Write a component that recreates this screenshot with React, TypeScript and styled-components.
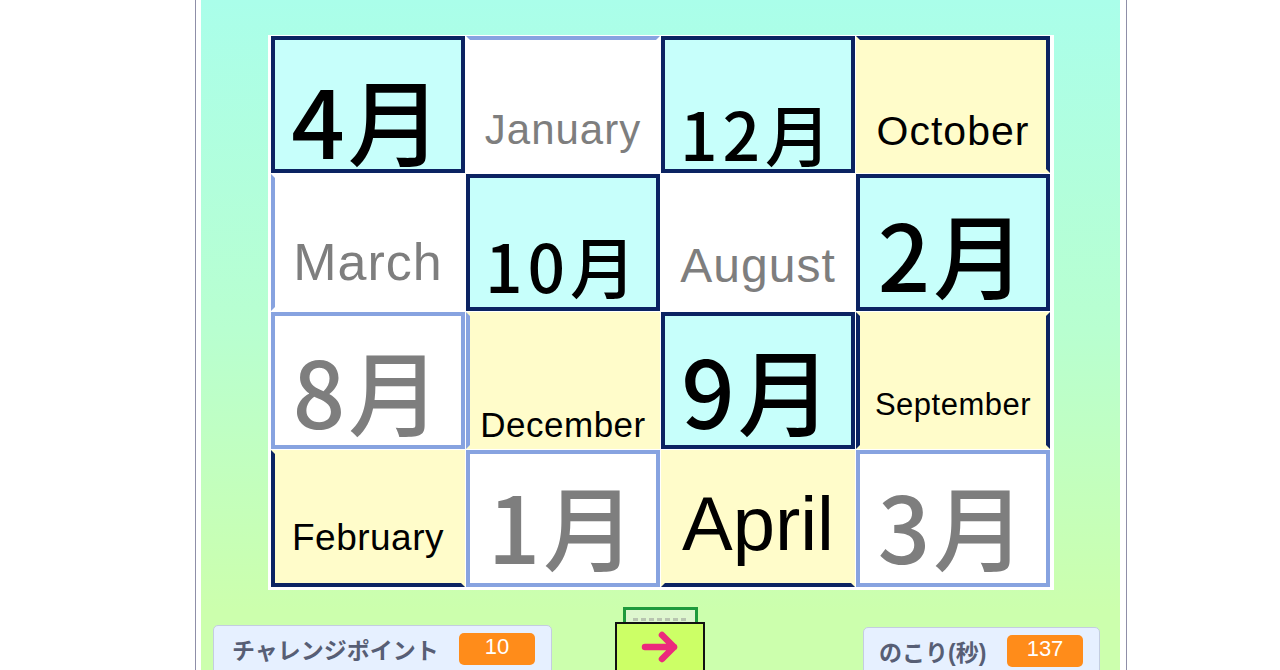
import React from 'react';
import styled, { createGlobalStyle } from 'styled-components';

const NAVY = '#0b2362';
const LIGHT = '#87a3e0';
const FILL: Record<string, string> = { c: '#c7fffb', w: '#ffffff', y: '#fffcca' };

const Global = createGlobalStyle`
  html, body { margin: 0; padding: 0; background: #fff; overflow: hidden; }
  body { font-family: "Liberation Sans", "Noto Sans CJK JP", sans-serif; }
`;

const Page = styled.div`
  width: 1280px;
  height: 670px;
  overflow: hidden;
  background: #fff;
`;

const Stage = styled.div`
  margin-left: 195px;
  width: 932px;
  height: 670px;
  box-sizing: border-box;
  border-left: 1px solid #8f8fa8;
  border-right: 1px solid #8f8fa8;
  padding: 0 6px 0 5px;
  background: #fff;
`;

const Canvas = styled.div`
  height: 100%;
  box-sizing: border-box;
  padding-top: 35px;
  background: linear-gradient(180deg, #aafeea 0px, #b8ffd0 330px, #ccffad 610px);
  display: flex;
  flex-direction: column;
  align-items: flex-start;
`;

const Board = styled.div`
  margin-left: 67px;
  width: 786px;
  box-sizing: border-box;
  background: #fff;
  padding: 1px 4px 3px 3px;
  display: grid;
  grid-template-columns: repeat(4, 194px);
  grid-template-rows: repeat(4, 137px);
  gap: 1px;
`;

type Side = 'n' | 'l' | '-';
const sideColor = (s: Side) => (s === 'n' ? NAVY : s === 'l' ? LIGHT : 'transparent');

const Tile = styled.div<{
  $bg: string;
  $b: Side[];
  $size: number;
  $pb: number;
  $cjk?: boolean;
  $ls?: number;
}>`
  box-sizing: border-box;
  display: flex;
  justify-content: center;
  align-items: flex-end;
  background: ${(p) => FILL[p.$bg]};
  border-style: solid;
  border-width: 4px;
  border-color: ${(p) => p.$b.map(sideColor).join(' ')};
  padding-bottom: ${(p) => p.$pb}px;
  color: ${(p) => (p.$bg === 'w' ? '#7e7e7e' : '#000')};
  font-family: ${(p) =>
    p.$cjk ? '"Noto Sans CJK JP", sans-serif' : '"Liberation Sans", Arial, sans-serif'};
  font-weight: ${(p) => (p.$cjk ? 500 : 400)};
  font-size: ${(p) => p.$size}px;
  letter-spacing: ${(p) => p.$ls ?? 0}px;
  line-height: 1;
  white-space: nowrap;
`;

type TileData = {
  t: string;
  bg: string;
  b: Side[];
  size: number;
  pb: number;
  cjk?: boolean;
  ls?: number;
};

const tiles: TileData[] = [
  { t: '4月', bg: 'c', b: ['n', 'n', 'n', 'n'], size: 94, pb: 4, cjk: true, ls: 3 },
  { t: 'January', bg: 'w', b: ['l', '-', '-', '-'], size: 42, pb: 18, ls: 1 },
  { t: '12月', bg: 'c', b: ['n', 'n', 'n', 'n'], size: 66, pb: 4, cjk: true, ls: 5 },
  { t: 'October', bg: 'y', b: ['n', 'n', '-', '-'], size: 41, pb: 17, ls: 1 },

  { t: 'March', bg: 'w', b: ['-', '-', '-', 'l'], size: 52, pb: 19, ls: 1 },
  { t: '10月', bg: 'c', b: ['n', 'n', 'n', 'n'], size: 66, pb: 10, cjk: true, ls: 5 },
  { t: 'August', bg: 'w', b: ['-', '-', '-', '-'], size: 48, pb: 17, ls: 1 },
  { t: '2月', bg: 'c', b: ['n', 'n', 'n', 'n'], size: 92, pb: 9, cjk: true, ls: 3 },

  { t: '8月', bg: 'w', b: ['l', 'l', 'l', 'l'], size: 92, pb: 10, cjk: true, ls: 3 },
  { t: 'December', bg: 'y', b: ['-', '-', '-', 'l'], size: 35, pb: 3, ls: 0.5 },
  { t: '9月', bg: 'c', b: ['n', 'n', 'n', 'n'], size: 94, pb: 10, cjk: true, ls: 3 },
  { t: 'September', bg: 'y', b: ['-', 'n', '-', 'n'], size: 31, pb: 25, ls: 0.5 },

  { t: 'February', bg: 'y', b: ['-', '-', 'n', 'n'], size: 37, pb: 27, ls: 0.5 },
  { t: '1月', bg: 'w', b: ['l', 'l', 'l', 'l'], size: 92, pb: 13, cjk: true, ls: 3 },
  { t: 'April', bg: 'y', b: ['-', '-', 'n', '-'], size: 76, pb: 21 },
  { t: '3月', bg: 'w', b: ['l', 'l', 'l', 'l'], size: 92, pb: 13, cjk: true, ls: 3 },
];

const Controls = styled.div`
  display: flex;
  align-items: flex-start;
  margin-top: 17px;
  padding-left: 12px;
`;

const Monitor = styled.div<{ $w: number; $mt: number; $ml: number; $pl: number }>`
  box-sizing: border-box;
  width: ${(p) => p.$w}px;
  height: 50px;
  margin-top: ${(p) => p.$mt}px;
  margin-left: ${(p) => p.$ml}px;
  padding: 0 16px 2px ${(p) => p.$pl}px;
  background: #e6f0ff;
  border: 1px solid #c4cde0;
  border-radius: 5px;
  display: flex;
  align-items: center;
`;

const MonitorLabel = styled.span`
  flex: 1;
  color: #575e75;
  font-family: "Liberation Sans", "Noto Sans CJK JP", sans-serif;
  font-weight: 700;
  font-size: 23px;
  white-space: nowrap;
`;

const Badge = styled.span`
  width: 76px;
  height: 32px;
  border-radius: 5px;
  background: #ff8c1a;
  color: #fff;
  font-family: "Liberation Sans", sans-serif;
  font-size: 22px;
  line-height: 28px;
  text-align: center;
`;

const NextWrap = styled.div`
  margin-left: 63px;
  display: flex;
  flex-direction: column;
  align-items: flex-start;
`;

const GreenTab = styled.div`
  box-sizing: border-box;
  width: 75px;
  height: 15px;
  margin-left: 8px;
  border: 3px solid #1e9a3c;
  border-bottom: none;
  background: #def6cf;
  display: flex;
  align-items: flex-end;
  justify-content: center;
  padding-bottom: 1px;
`;

const TabMarks = styled.div`
  width: 56px;
  height: 3px;
  background: repeating-linear-gradient(90deg, #b8c4b0 0 5px, transparent 5px 8px);
`;

const NextButton = styled.div`
  box-sizing: border-box;
  width: 90px;
  height: 60px;
  background: #ccff66;
  border: 2px solid #111;
  display: flex;
  justify-content: center;
  padding-top: 4px;
`;

const Arrow = () => (
  <svg width="40" height="38" viewBox="0 0 40 38">
    <path
      d="M5 19 H34 M22 7 L34 19 L22 31"
      fill="none"
      stroke="#ec2a7c"
      strokeWidth="6.5"
      strokeLinecap="round"
      strokeLinejoin="round"
    />
  </svg>
);

export default function App() {
  return (
    <Page>
      <Global />
      <Stage>
        <Canvas>
          <Board>
            {tiles.map((d, i) => (
              <Tile
                key={i}
                $bg={d.bg}
                $b={d.b}
                $size={d.size}
                $pb={d.pb}
                $cjk={d.cjk}
                $ls={d.ls}
              >
                {d.t}
              </Tile>
            ))}
          </Board>
          <Controls>
            <Monitor $w={339} $mt={18} $ml={0} $pl={18}>
              <MonitorLabel>チャレンジポイント</MonitorLabel>
              <Badge>10</Badge>
            </Monitor>
            <NextWrap>
              <GreenTab>
                <TabMarks />
              </GreenTab>
              <NextButton>
                <Arrow />
              </NextButton>
            </NextWrap>
            <Monitor $w={237} $mt={20} $ml={158} $pl={15}>
              <MonitorLabel>のこり(秒)</MonitorLabel>
              <Badge>137</Badge>
            </Monitor>
          </Controls>
        </Canvas>
      </Stage>
    </Page>
  );
}
